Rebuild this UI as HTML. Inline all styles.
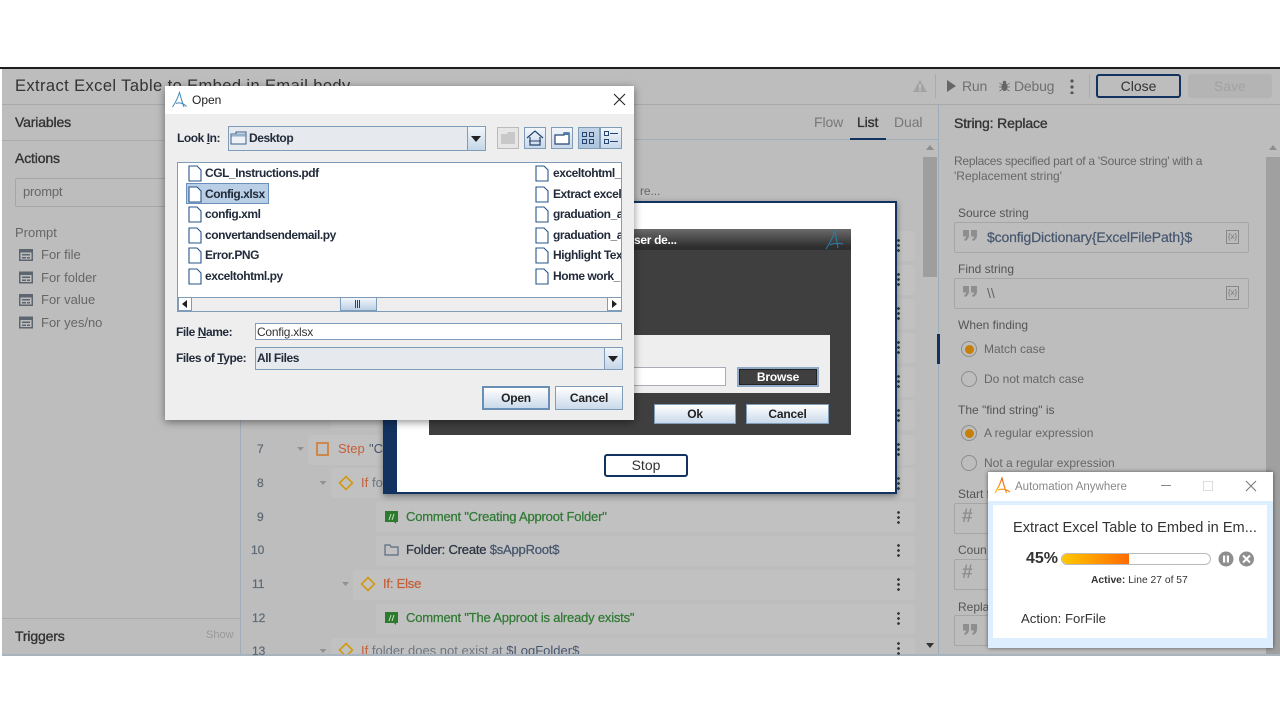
<!DOCTYPE html>
<html><head><meta charset="utf-8"><style>
*{box-sizing:border-box}
html,body{margin:0;padding:0;background:#fff;width:1280px;height:720px;overflow:hidden;font-family:"Liberation Sans",sans-serif}
.a{position:absolute}
.t{position:absolute;white-space:nowrap;line-height:20px;height:20px;font-size:13px;color:#4d4d4d}
.b{font-weight:bold}
.s{-webkit-text-stroke:.35px currentColor;letter-spacing:-.15px}
.row{position:absolute;height:30px;background:#c1c1c1;border-radius:3px;right:365px}
.keb{position:absolute;width:3px;height:13px;left:897px;background:radial-gradient(circle at 1.5px 1.5px,#3a3f46 1.3px,transparent 1.5px) 0 0/3px 5px}
.j{color:#222b3a;font-size:12px;font-weight:bold;letter-spacing:-.45px}
.c{font-size:13px;-webkit-text-stroke:.25px currentColor;letter-spacing:-.2px}
.n{font-size:12px;color:#5f6a77;-webkit-text-stroke:.25px currentColor}
.btn{position:absolute;border:1px solid #7f9db9;background:linear-gradient(#fff,#c9d9ea);color:#222;font-weight:bold;font-size:12px;text-align:center;letter-spacing:-.2px}
.box{position:absolute;border:1px solid #a6a6a6;border-radius:2px;left:954px;width:295px;height:31px}
.radio{position:absolute;left:961px;width:16px;height:16px;border:1px solid #8d8d8d;border-radius:50%;background:#bdbdbd}
.radio.on:after{content:"";position:absolute;left:2.5px;top:2.5px;width:9px;height:9px;border-radius:50%;background:#c67f07}
.tb{position:absolute;top:127px;width:22px;height:22px;border:1px solid #7f9db9;background:linear-gradient(#f2f6fb,#c8d8ea)}
</style></head><body>
<div class="a" style="left:0;top:67px;width:1280px;height:2px;background:#1d1d1d"></div>
<div class="a" style="left:2px;top:69px;width:1278px;height:586px;background:#bdbdbd;overflow:hidden"></div>
<div class="a" style="left:2px;top:104px;width:1278px;height:1px;background:#a9a9a9"></div>
<div class="a" style="left:2px;top:140px;width:238px;height:1px;background:#aaa"></div>
<div class="a" style="left:240px;top:139px;width:698px;height:1px;background:#9fadba"></div>
<div class="a" style="left:240px;top:105px;width:1px;height:550px;background:#9fadba"></div>
<div class="a" style="left:938px;top:105px;width:1px;height:550px;background:#9fadba"></div>
<div class="a" style="left:937px;top:334px;width:3px;height:30px;background:#12335f"></div>
<div class="a" style="left:2px;top:618px;width:238px;height:1px;background:#aaa"></div>
<div class="a" style="left:2px;top:654px;width:1278px;height:2px;background:#a9b3bd"></div>

<div class="t" style="left:15px;top:76px;font-size:16.5px;color:#333;letter-spacing:.4px">Extract Excel Table to Embed in Email body</div>
<svg class="a" style="left:912px;top:78px" width="16" height="16"><path d="M8 2L15 14H1Z" fill="#a3a3a3"/><rect x="7.3" y="6" width="1.4" height="4.5" fill="#d0d0d0"/><rect x="7.3" y="11.2" width="1.4" height="1.5" fill="#d0d0d0"/></svg>
<div class="a" style="left:935px;top:74px;width:1px;height:24px;background:#aaa"></div>
<svg class="a" style="left:947px;top:80px" width="10" height="13"><path d="M0 0L9 6L0 12Z" fill="#666"/></svg>
<div class="t" style="left:962px;top:76px;font-size:14px;color:#707070;letter-spacing:-.2px">Run</div>
<svg class="a" style="left:999px;top:80px" width="11" height="12"><ellipse cx="5.500" cy="7" rx="3" ry="4" fill="#666"/><circle cx="5.500" cy="2.500" r="1.800" fill="#666"/><path d="M.5 3L3 5M10.500 3L8 5M0 7H3M11 7H8M.5 11L3 9.500M10.500 11L8 9.500" stroke="#666" stroke-width=".8"/></svg>
<div class="t" style="left:1014px;top:76px;font-size:14px;color:#707070;letter-spacing:-.2px">Debug</div>
<div class="a" style="left:1070px;top:79px;width:4px;height:15px;background:radial-gradient(circle at 2px 2px,#555 1.6px,transparent 1.8px) 0 0/4px 6px"></div>
<div class="a" style="left:1089px;top:74px;width:1px;height:24px;background:#aaa"></div>
<div class="a" style="left:1096px;top:74px;width:85px;height:24px;border:2px solid #12335f;border-radius:3px;text-align:center;line-height:20px;font-size:14px;color:#333">Close</div>
<div class="a" style="left:1188px;top:74px;width:84px;height:24px;background:#b4b4b4;border-radius:3px;text-align:center;line-height:24px;font-size:14px;color:#a2a2a2">Save</div>

<div class="t s" style="left:15px;top:112px;font-size:14px;color:#333">Variables</div>
<div class="t s" style="left:15px;top:148px;font-size:14px;color:#333">Actions</div>
<div class="a" style="left:15px;top:178px;width:200px;height:29px;border:1px solid #a6a6a6;border-radius:2px"></div>
<div class="t" style="left:23px;top:182px;color:#666;letter-spacing:-.2px">prompt</div>
<div class="t" style="left:15px;top:223px;color:#666">Prompt</div>
<svg class="a" style="left:19px;top:249px" width="15" height="90"><g fill="#5d6670"><path d="M0 0h14v12H0zM1.5 3.5v7h11v-7z" fill-rule="evenodd"/><rect x="3" y="5" width="8" height="1.5"/><rect x="3" y="8" width="4" height="1.5"/><rect x="8" y="8" width="3" height="1.5"/></g><g fill="#5d6670" transform="translate(0,22.5)"><path d="M0 0h14v12H0zM1.5 3.5v7h11v-7z" fill-rule="evenodd"/><rect x="3" y="5" width="8" height="1.5"/><rect x="3" y="8" width="4" height="1.5"/><rect x="8" y="8" width="3" height="1.5"/></g><g fill="#5d6670" transform="translate(0,45)"><path d="M0 0h14v12H0zM1.5 3.5v7h11v-7z" fill-rule="evenodd"/><rect x="3" y="5" width="8" height="1.5"/><rect x="3" y="8" width="4" height="1.5"/><rect x="8" y="8" width="3" height="1.5"/></g><g fill="#5d6670" transform="translate(0,67.5)"><path d="M0 0h14v12H0zM1.5 3.5v7h11v-7z" fill-rule="evenodd"/><rect x="3" y="5" width="8" height="1.5"/><rect x="3" y="8" width="4" height="1.5"/><rect x="8" y="8" width="3" height="1.5"/></g></svg>
<div class="t" style="left:41px;top:245px;color:#666">For file</div>
<div class="t" style="left:41px;top:268px;color:#666">For folder</div>
<div class="t" style="left:41px;top:290px;color:#666">For value</div>
<div class="t" style="left:41px;top:313px;color:#666">For yes/no</div>
<div class="t s" style="left:15px;top:626px;font-size:14px;color:#333">Triggers</div>
<div class="t" style="left:206px;top:625px;font-size:11px;color:#999">Show</div>

<div class="t" style="left:814px;top:112px;font-size:14px;color:#777;letter-spacing:-.1px">Flow</div>
<div class="t s" style="left:857px;top:112px;font-size:14px;color:#333">List</div>
<div class="t" style="left:894px;top:112px;font-size:14px;color:#777;letter-spacing:-.1px">Dual</div>
<div class="a" style="left:850px;top:138px;width:36px;height:2px;background:#12335f"></div>

<div class="row" style="left:331px;top:400px"></div>
<div class="row" style="left:308px;top:435px"></div>
<div class="row" style="left:331px;top:468px"></div>
<div class="row" style="left:376px;top:502px"></div>
<div class="row" style="left:376px;top:536px"></div>
<div class="row" style="left:353px;top:570px"></div>
<div class="row" style="left:376px;top:604px"></div>
<div class="a" style="left:331px;top:638px;width:584px;height:16px;background:#c1c1c1"></div>
<div class="row" style="left:860px;top:231px;right:365px"></div>
<div class="row" style="left:860px;top:265px"></div>
<div class="row" style="left:860px;top:299px"></div>
<div class="row" style="left:860px;top:333px"></div>
<div class="row" style="left:860px;top:367px"></div>
<div class="t" style="left:640px;top:181px;font-size:12px;color:#666;letter-spacing:-.1px">re...</div>

<div class="t n" style="left:257px;top:439px">7</div>
<div class="t n" style="left:257px;top:473px">8</div>
<div class="t n" style="left:257px;top:507px">9</div>
<div class="t n" style="left:251px;top:540px">10</div>
<div class="t n" style="left:252px;top:574px">11</div>
<div class="t n" style="left:252px;top:608px">12</div>
<div class="t n" style="left:252px;top:641px">13</div>
<svg class="a" style="left:290px;top:440px" width="70" height="220"><g fill="#929292"><path d="M7 7h7l-3.500 4z"/><path d="M29.500 41h7l-3.500 4z"/><path d="M52 142h7l-3.500 4z"/><path d="M29.500 209h7l-3.500 4z"/></g></svg>
<svg class="a" style="left:315px;top:441px" width="16" height="16"><rect x="2" y="2" width="11" height="12" fill="none" stroke="#d27b30" stroke-width="1.6"/></svg>
<div class="t" style="left:338px;top:439px;color:#c55f37;font-size:13px">Step</div>
<div class="t" style="left:369px;top:439px;color:#46566e;font-size:13px">"Cr</div>
<svg class="a" style="left:338px;top:475px" width="16" height="16"><path d="M8 1.500L14.500 8L8 14.500L1.500 8Z" fill="none" stroke="#d19a10" stroke-width="1.6"/></svg>
<div class="t" style="left:361px;top:473px;color:#c55f37">If</div><div class="t" style="left:372px;top:473px;color:#6d7680">fo</div>
<svg class="a" style="left:384px;top:510px" width="16" height="15"><path d="M1 1h13v11h-2v2l-2-2H1Z" fill="#2c7a2c"/><path d="M5 10L7 4M8 10L10 4" stroke="#c8e0c8"/></svg>
<div class="t c" style="left:406px;top:507px;color:#2f7a34">Comment "Creating Approot Folder"</div>
<svg class="a" style="left:384px;top:543px" width="15" height="14"><path d="M1 2h5l1 2h7v8H1Z" fill="none" stroke="#5a6b80" stroke-width="1.200"/></svg>
<div class="t c" style="left:406px;top:540px;color:#2b3340">Folder: Create <span style="color:#46566e">$sAppRoot$</span></div>
<svg class="a" style="left:360px;top:576px" width="16" height="16"><path d="M8 1.500L14.500 8L8 14.500L1.500 8Z" fill="none" stroke="#d19a10" stroke-width="1.600"/></svg>
<div class="t c" style="left:383px;top:574px;color:#c55f37">If: Else</div>
<svg class="a" style="left:384px;top:611px" width="16" height="15"><path d="M1 1h13v11h-2v2l-2-2H1Z" fill="#2c7a2c"/><path d="M5 10L7 4M8 10L10 4" stroke="#c8e0c8"/></svg>
<div class="t c" style="left:406px;top:608px;color:#2f7a34">Comment "The Approot is already exists"</div>
<div class="a" style="left:330px;top:641px;width:420px;height:13px;overflow:hidden">
<svg class="a" style="left:8px;top:1px" width="16" height="16"><path d="M8 1.500L14.500 8L8 14.500L1.500 8Z" fill="none" stroke="#d19a10" stroke-width="1.600"/></svg>
<div class="t" style="left:31px;top:0"><span style="color:#c55f37">If</span> <span style="color:#6d7680">folder does not exist at</span> <span style="color:#46566e">$LogFolder$</span></div></div>

<div class="keb" style="top:239px"></div><div class="keb" style="top:273px"></div><div class="keb" style="top:307px"></div><div class="keb" style="top:341px"></div><div class="keb" style="top:375px"></div><div class="keb" style="top:409px"></div><div class="keb" style="top:443px"></div><div class="keb" style="top:477px"></div><div class="keb" style="top:511px"></div><div class="keb" style="top:544px"></div><div class="keb" style="top:578px"></div><div class="keb" style="top:612px"></div><div class="keb" style="top:642px"></div>

<div class="a" style="left:923px;top:157px;width:14px;height:120px;background:#9e9e9e"></div>
<svg class="a" style="left:925px;top:144px" width="10" height="8"><path d="M1 6h8L5 1z" fill="#8e8e8e"/></svg>
<svg class="a" style="left:925px;top:642px" width="10" height="8"><path d="M1 1h8L5 6z" fill="#333"/></svg>
<div class="a" style="left:1266px;top:157px;width:14px;height:497px;background:#a0a0a0"></div>
<svg class="a" style="left:1268px;top:144px" width="10" height="8"><path d="M1 6h8L5 1z" fill="#8e8e8e"/></svg>

<div class="t s" style="left:954px;top:113px;font-size:14px;color:#333">String: Replace</div>
<div class="t" style="left:954px;top:151px;font-size:12px;color:#666;letter-spacing:-.26px">Replaces specified part of a 'Source string' with a</div>
<div class="t" style="left:954px;top:166px;font-size:12px;color:#666">'Replacement string'</div>
<div class="t" style="left:958px;top:203px;font-size:12px;color:#555">Source string</div>
<div class="box" style="top:222px"></div>
<svg class="a" style="left:963px;top:230px" width="15" height="12"><path id="q" d="M0 0h6v5.500C6 8 4.500 10 2 11L1 9.500C2.300 8.800 3 7.800 3 6.500H0ZM8 0h6v5.500C14 8 12.500 10 10 11L9 9.500C10.300 8.800 11 7.800 11 6.500H8Z" fill="#8e8e8e"/></svg>
<div class="t s" style="left:987px;top:227px;font-size:14px;color:#46566e;-webkit-text-stroke-width:.2px">$configDictionary{ExcelFilePath}$</div>
<div class="a" style="left:1226px;top:230px;width:13px;height:14px;border:1px solid #888;font-size:8px;line-height:12px;text-align:center;color:#777">{x}</div>
<div class="t" style="left:958px;top:259px;font-size:12px;color:#555">Find string</div>
<div class="box" style="top:278px"></div>
<svg class="a" style="left:963px;top:286px" width="15" height="12"><path d="M0 0h6v5.500C6 8 4.500 10 2 11L1 9.500C2.300 8.800 3 7.800 3 6.500H0ZM8 0h6v5.500C14 8 12.500 10 10 11L9 9.500C10.300 8.800 11 7.800 11 6.500H8Z" fill="#8e8e8e"/></svg>
<div class="t" style="left:987px;top:283px;font-size:14px;color:#666">\\</div>
<div class="a" style="left:1226px;top:286px;width:13px;height:14px;border:1px solid #888;font-size:8px;line-height:12px;text-align:center;color:#777">{x}</div>
<div class="t" style="left:958px;top:315px;font-size:12px;color:#555">When finding</div>
<div class="radio on" style="top:341px"></div>
<div class="t" style="left:984px;top:339px;font-size:12px;color:#666">Match case</div>
<div class="radio" style="top:371px"></div>
<div class="t" style="left:984px;top:369px;font-size:12px;color:#666">Do not match case</div>
<div class="t" style="left:958px;top:400px;font-size:12px;color:#555">The "find string" is</div>
<div class="radio on" style="top:425px"></div>
<div class="t" style="left:984px;top:423px;font-size:12px;color:#666">A regular expression</div>
<div class="radio" style="top:455px"></div>
<div class="t" style="left:984px;top:453px;font-size:12px;color:#666">Not a regular expression</div>
<div class="t" style="left:958px;top:484px;font-size:12px;color:#555">Start f</div>
<div class="box" style="top:503px"></div>
<div class="t" style="left:962px;top:507px;font-size:19px;color:#8e8e8e;font-weight:bold">#</div>
<div class="t" style="left:958px;top:540px;font-size:12px;color:#555">Coun</div>
<div class="box" style="top:559px"></div>
<div class="t" style="left:962px;top:563px;font-size:19px;color:#8e8e8e;font-weight:bold">#</div>
<div class="t" style="left:958px;top:597px;font-size:12px;color:#555">Repla</div>
<div class="box" style="top:615px"></div>
<svg class="a" style="left:963px;top:624px" width="15" height="12"><path d="M0 0h6v5.500C6 8 4.500 10 2 11L1 9.500C2.300 8.800 3 7.800 3 6.500H0ZM8 0h6v5.500C14 8 12.500 10 10 11L9 9.500C10.300 8.800 11 7.800 11 6.500H8Z" fill="#8e8e8e"/></svg>

<!-- White run dialog -->
<div class="a" style="left:383px;top:201px;width:514px;height:293px;background:#fff;border:2px solid #12335f;border-left:14px solid #12335f;box-shadow:0 2px 6px rgba(0,0,0,.4)"></div>
<div class="a" style="left:429px;top:229px;width:422px;height:206px;background:#3f3f3f"></div>
<div class="a" style="left:429px;top:229px;width:422px;height:21px;background:linear-gradient(#6a6a6a,#2e2e2e 85%)"></div>
<div class="t b" style="left:634px;top:230px;font-size:12px;color:#fff;letter-spacing:-.3px">ser de...</div>
<svg class="a" style="left:823px;top:229px" width="24" height="21"><path d="M3 20C7 14 10 8 12 1C13 8 14 13 15 19M7 16C11 14 15 14 20 15" fill="none" stroke="#2a7fa8" stroke-width="1"/></svg>
<div class="a" style="left:634px;top:335px;width:196px;height:58px;background:#eee"></div>
<div class="a" style="left:634px;top:367px;width:92px;height:19px;background:#fff;border:1px solid #aab;border-left:0"></div>
<div class="a" style="left:737px;top:367px;width:82px;height:20px;background:#3f3f3f;border:2px solid #8faac8;outline:1px solid #222;outline-offset:-3px;color:#fff;font-weight:bold;font-size:12px;text-align:center;line-height:16px;letter-spacing:-.2px">Browse</div>
<div class="btn" style="left:654px;top:404px;width:82px;height:20px;line-height:18px">Ok</div>
<div class="btn" style="left:746px;top:404px;width:83px;height:20px;line-height:18px">Cancel</div>
<div class="a" style="left:604px;top:454px;width:84px;height:23px;border:2px solid #12335f;border-radius:3px;background:#fff;text-align:center;line-height:19px;font-size:14px;color:#333">Stop</div>

<!-- Open dialog -->
<div class="a" style="left:165px;top:86px;width:469px;height:334px;background:#eee;box-shadow:0 2px 8px rgba(0,0,0,.45)"></div>
<div class="a" style="left:165px;top:86px;width:469px;height:28px;background:#fff"></div>
<svg class="a" style="left:171px;top:91px" width="18" height="18"><path d="M1.500 16C5 11 7 6 8.500 1.500C10 7 11.500 12 13 16M5 12.500C8 11 12 12 15.500 15.500" fill="none" stroke="#3f88bb" stroke-width="1"/></svg>
<div class="t" style="left:192px;top:90px;font-size:12px;color:#222">Open</div>
<svg class="a" style="left:613px;top:93px" width="13" height="13"><path d="M1 1L12 12M12 1L1 12" stroke="#222" stroke-width="1.100"/></svg>
<div class="t j" style="left:177px;top:128px">Look <u>I</u>n:</div>
<div class="a" style="left:228px;top:126px;width:258px;height:25px;border:1px solid #7f9db9;background:#e6e9ee"></div>
<div class="a" style="left:467px;top:127px;width:18px;height:23px;border-left:1px solid #7f9db9;background:linear-gradient(#f2f6fb,#c5d6e8)"></div>
<svg class="a" style="left:470px;top:135px" width="12" height="8"><path d="M1 1h10L6 7z" fill="#222"/></svg>
<svg class="a" style="left:230px;top:130px" width="17" height="16"><path d="M1 4h5V2h10v12H1Z" fill="#eef2f7" stroke="#3a5f8a"/><path d="M1 4h15v2H1Z" fill="#b5cbe0" stroke="#3a5f8a" stroke-width=".6"/></svg>
<div class="t j" style="left:249px;top:128px">Desktop</div>
<div class="tb" style="left:497px;background:#e6e6e6;border-color:#bbb"><svg width="20" height="20"><path d="M3 6h6l1-2h7v12H3Z" fill="#c8c8c8"/></svg></div>
<div class="tb" style="left:524px"><svg width="20" height="20"><path d="M2 10L10 3L18 10M5 9v8h10V9" fill="none" stroke="#26456e" stroke-width="1.200"/><path d="M4 13h12" stroke="#26456e"/></svg></div>
<div class="tb" style="left:551px"><svg width="20" height="20"><path d="M3 7h9V5h5v11H3Z" fill="#fff" stroke="#26456e" stroke-width="1.200"/><path d="M12 5h5v2h-5z" fill="#4a78b0"/></svg></div>
<div class="tb" style="left:578px;background:linear-gradient(#c2d3e6,#aec4dc)"><svg width="20" height="20"><g fill="none" stroke="#26456e"><rect x="3.500" y="4.500" width="4" height="4"/><rect x="3.500" y="11.500" width="4" height="4"/><rect x="10.500" y="4.500" width="4" height="4"/><rect x="10.500" y="11.500" width="4" height="4"/></g></svg></div>
<div class="tb" style="left:600px;width:22px"><svg width="20" height="20"><g fill="none" stroke="#26456e"><rect x="3.500" y="3.500" width="4" height="4"/><rect x="3.500" y="11.500" width="4" height="4"/><path d="M9 5.500h8M9 13.500h8"/></g></svg></div>

<div class="a" style="left:177px;top:162px;width:445px;height:150px;background:#fff;border:1px solid #7f9db9"></div>
<div class="a" style="left:186px;top:183px;width:83px;height:21px;background:#b8cfe5;border:1px solid #6a8fbd"></div>
<svg class="a" style="left:187px;top:164px" width="16" height="124"><g fill="#fff" stroke="#26558a" stroke-width="1.100"><path d="M2 2h8l4 4v11H2Z"/><path d="M2 23h8l4 4v11H2Z"/><path d="M2 43h8l4 4v11H2Z"/><path d="M2 64h8l4 4v11H2Z"/><path d="M2 84h8l4 4v11H2Z"/><path d="M2 105h8l4 4v11H2Z"/></g></svg>
<svg class="a" style="left:534px;top:164px" width="16" height="124"><g fill="#fff" stroke="#26558a" stroke-width="1.100"><path d="M2 2h8l4 4v11H2Z"/><path d="M2 23h8l4 4v11H2Z"/><path d="M2 43h8l4 4v11H2Z"/><path d="M2 64h8l4 4v11H2Z"/><path d="M2 84h8l4 4v11H2Z"/><path d="M2 105h8l4 4v11H2Z"/></g></svg>
<div class="t j" style="left:205px;top:163px">CGL_Instructions.pdf</div>
<div class="t j" style="left:205px;top:184px">Config.xlsx</div>
<div class="t j" style="left:205px;top:204px">config.xml</div>
<div class="t j" style="left:205px;top:225px">convertandsendemail.py</div>
<div class="t j" style="left:205px;top:245px">Error.PNG</div>
<div class="t j" style="left:205px;top:266px">exceltohtml.py</div>
<div class="a" style="left:553px;top:163px;width:68px;height:124px;overflow:hidden">
<div class="t j" style="left:0;top:0">exceltohtml_</div>
<div class="t j" style="left:0;top:21px">Extract excel</div>
<div class="t j" style="left:0;top:41px">graduation_a</div>
<div class="t j" style="left:0;top:62px">graduation_a</div>
<div class="t j" style="left:0;top:82px">Highlight Text</div>
<div class="t j" style="left:0;top:103px">Home work_</div>
</div>
<div class="a" style="left:178px;top:297px;width:443px;height:14px;background:#eee;border-top:1px solid #7f9db9"></div>
<div class="a" style="left:178px;top:297px;width:14px;height:14px;border:1px solid #7f9db9;background:#fff"></div>
<svg class="a" style="left:181px;top:300px" width="8" height="9"><path d="M6 0v8L1 4z" fill="#222"/></svg>
<div class="a" style="left:607px;top:297px;width:15px;height:14px;border:1px solid #7f9db9;background:#fff"></div>
<svg class="a" style="left:611px;top:300px" width="8" height="9"><path d="M1 0v8L6 4z" fill="#222"/></svg>
<div class="a" style="left:340px;top:297px;width:37px;height:14px;border:1px solid #7f9db9;background:linear-gradient(#f2f6fb,#bcd0e5)"></div>
<div class="a" style="left:355px;top:300px;width:6px;height:8px;background:repeating-linear-gradient(90deg,#26456e 0 1px,transparent 1px 2px)"></div>
<div class="t j" style="left:176px;top:322px">File <u>N</u>ame:</div>
<div class="a" style="left:255px;top:323px;width:367px;height:17px;background:#fff;border:1px solid #7f9db9"></div>
<div class="t" style="left:257px;top:322px;font-size:12px;color:#333;letter-spacing:-.25px">Config.xlsx</div>
<div class="t j" style="left:176px;top:348px">Files of <u>T</u>ype:</div>
<div class="a" style="left:255px;top:347px;width:368px;height:23px;border:1px solid #7f9db9;background:#e6e9ee"></div>
<div class="a" style="left:604px;top:348px;width:18px;height:21px;border-left:1px solid #7f9db9;background:linear-gradient(#f2f6fb,#c5d6e8)"></div>
<svg class="a" style="left:607px;top:355px" width="12" height="8"><path d="M1 1h10L6 7z" fill="#222"/></svg>
<div class="t j" style="left:257px;top:348px">All Files</div>
<div class="btn" style="left:482px;top:386px;width:68px;height:24px;line-height:21px;border:2px solid #6a8fb5">Open</div>
<div class="btn" style="left:555px;top:386px;width:68px;height:24px;line-height:22px">Cancel</div>

<!-- Automation Anywhere -->
<div class="a" style="left:988px;top:472px;width:285px;height:176px;background:#ddeeff;box-shadow:0 0 4px rgba(0,0,0,.55)"></div>
<div class="a" style="left:988px;top:472px;width:285px;height:29px;background:#fff"></div>
<svg class="a" style="left:994px;top:477px" width="18" height="18"><defs><linearGradient id="g" x1="0" y1="1" x2="1" y2="0"><stop offset="0" stop-color="#ffc000"/><stop offset="1" stop-color="#f0401f"/></linearGradient></defs><path d="M1 16C4 11 6.500 6 8 1C9.500 7 11 12 12.500 16M4 13C8 11.500 12 12 16 15" fill="none" stroke="url(#g)" stroke-width="1.200"/></svg>
<div class="t" style="left:1015px;top:477px;font-size:11.500px;color:#888">Automation Anywhere</div>
<div class="a" style="left:1161px;top:485px;width:10px;height:1px;background:#888"></div>
<div class="a" style="left:1203px;top:481px;width:10px;height:10px;border:1px solid #ddd"></div>
<svg class="a" style="left:1245px;top:480px" width="12" height="12"><path d="M1 1L11 11M11 1L1 11" stroke="#777"/></svg>
<div class="a" style="left:993px;top:505px;width:274px;height:133px;background:#fff"></div>
<div class="t" style="left:1013px;top:518px;font-size:14.600px;color:#333">Extract Excel Table to Embed in Em...</div>
<div class="t b" style="left:1026px;top:549px;font-size:16px;color:#333">45%</div>
<div class="a" style="left:1061px;top:553px;width:150px;height:12px;border:1px solid #bbb;border-radius:6px;background:#fff"></div>
<div class="a" style="left:1062px;top:554px;width:67px;height:10px;border-radius:5px 0 0 5px;background:linear-gradient(90deg,#ffc800,#ff6a00)"></div>
<svg class="a" style="left:1218px;top:551px" width="38" height="16"><circle cx="8" cy="8" r="7.500" fill="#8e8e8e"/><rect x="5" y="4.500" width="2.200" height="7" fill="#fff"/><rect x="8.800" y="4.500" width="2.200" height="7" fill="#fff"/><circle cx="28.500" cy="8" r="7.500" fill="#8e8e8e"/><path d="M25 4.500L32 11.500M32 4.500L25 11.500" stroke="#fff" stroke-width="2"/></svg>
<div class="t" style="left:1091px;top:571px;font-size:10.300px;color:#333"><b>Active:</b> Line 27 of 57</div>
<div class="t" style="left:1021px;top:609px;font-size:13.200px;color:#333">Action: ForFile</div>
</body></html>
